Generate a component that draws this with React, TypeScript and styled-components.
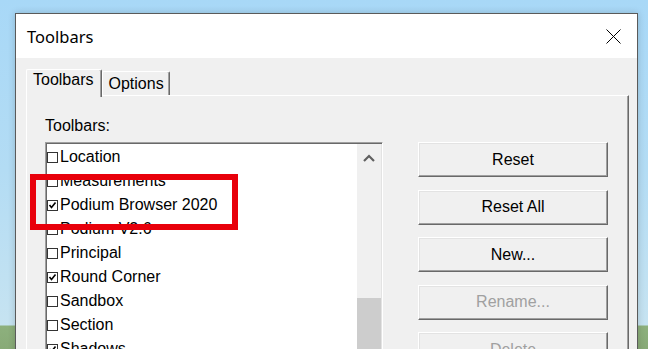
import React from "react";
import styled, { createGlobalStyle } from "styled-components";

const GlobalStyle = createGlobalStyle`
  html, body {
    margin: 0;
    padding: 0;
  }
`;

// 바탕화면 (배경)
const Desktop = styled.div`
  position: relative;
  width: 648px;
  height: 349px;
  overflow: hidden;
  background: linear-gradient(
    180deg,
    #a8d8f7 0px,
    #b3dcf4 170px,
    #c6e3f1 325px,
    #8db07d 326px,
    #88aa77 349px
  );
  font-family: "Liberation Sans", Arial, sans-serif;
  font-size: 16px;
  color: #000;
`;

const Dialog = styled.div`
  margin: 13px 0 0 15px;
  width: 621px;
  height: 400px;
  border: 1px solid #5a5a5a;
  background: #f0f0f0;
  box-shadow: 0 0 7px rgba(0, 0, 0, 0.18);
`;

const TitleBar = styled.div`
  height: 44px;
  background: #fff;
  display: flex;
  align-items: center;
  justify-content: space-between;
  padding: 0 16px 0 11px;
`;

const Title = styled.span`
  font-family: "Noto Sans", "Open Sans", sans-serif;
  font-size: 16.5px;
  color: #000;
`;

const CloseBtn = styled.div`
  width: 15px;
  height: 15px;
  display: flex;
`;

const Body = styled.div`
  padding: 11px 8px 0 10px;
`;

const TabStrip = styled.div`
  display: flex;
  align-items: flex-end;
  height: 26px;
  position: relative;
  z-index: 1;
`;

const Tab = styled.div<{ $active?: boolean }>`
  height: ${(p) => (p.$active ? "28px" : "24px")};
  margin-bottom: ${(p) => (p.$active ? "-2px" : "0")};
  padding: ${(p) => (p.$active ? "0 8px 0 6px" : "2px 5px 0 5px")};
  box-sizing: border-box;
  background: #f0f0f0;
  border-top: 1px solid #fff;
  border-left: 1px solid #fff;
  border-right: 1px solid #696969;
  border-top-left-radius: 2px;
  border-top-right-radius: 2px;
  box-shadow: inset -1px 0 0 #a0a0a0;
  line-height: 20px;
`;

const Panel = styled.div`
  border-top: 1px solid #fff;
  border-left: 1px solid #fff;
  border-right: 1px solid #696969;
  box-shadow: inset -1px 0 0 #a0a0a0;
  height: 300px;
  padding: 21px 0 0 18px;
`;

const Content = styled.div`
  display: grid;
  grid-template-columns: 338px 190px;
  grid-template-rows: 18px auto;
  column-gap: 35px;
  row-gap: 7px;
`;

const Label = styled.div`
  line-height: 18px;
  grid-column: 1 / 3;
`;

const ListBox = styled.div`
  height: 240px;
  background: #fff;
  border-top: 1px solid #a0a0a0;
  border-left: 1px solid #a0a0a0;
  border-right: 1px solid #fff;
  border-bottom: 1px solid #fff;
  box-shadow: inset 1px 1px 0 #696969, inset -1px -1px 0 #e3e3e3;
  padding: 1px;
  display: flex;
`;

const Items = styled.div`
  flex: 1;
  padding-top: 1px;
`;

const Row = styled.div`
  height: 24px;
  display: flex;
  align-items: center;
  line-height: 24px;
  white-space: nowrap;
`;

const Box = styled.span`
  width: 11px;
  height: 11px;
  box-sizing: border-box;
  border: 1px solid #333;
  background: #fff;
  margin: 1px 2px 0 0;
  display: flex;
  align-items: center;
  justify-content: center;
`;

const ScrollBar = styled.div`
  width: 24px;
  background: #f0f0f0;
  display: flex;
  flex-direction: column;
`;

const ScrollArrow = styled.div`
  height: 28px;
  display: flex;
  align-items: center;
  justify-content: center;
`;

const Thumb = styled.div`
  margin-top: 126px;
  flex: 1;
  background: #cdcdcd;
`;

const Buttons = styled.div`
  display: flex;
  flex-direction: column;
  gap: 12.5px;
`;

const Button = styled.div<{ $disabled?: boolean }>`
  height: 35px;
  box-sizing: border-box;
  background: #f0f0f0;
  border-top: 1px solid #fff;
  border-left: 1px solid #fff;
  border-right: 1px solid #696969;
  border-bottom: 1px solid #696969;
  box-shadow: inset -1px -1px 0 #a0a0a0, inset 1px 1px 0 #e3e3e3;
  display: flex;
  align-items: center;
  justify-content: center;
  color: ${(p) => (p.$disabled ? "#a0a0a0" : "#000")};
`;

// 빨간 표시 박스 (주석용 오버레이)
const Highlight = styled.div`
  position: absolute;
  left: 30px;
  top: 174px;
  width: 208px;
  height: 56px;
  box-sizing: border-box;
  border: 6px solid #e8000b;
  pointer-events: none;
`;

const items: { name: string; checked: boolean }[] = [
  { name: "Location", checked: false },
  { name: "Measurements", checked: false },
  { name: "Podium Browser 2020", checked: true },
  { name: "Podium V2.6", checked: false },
  { name: "Principal", checked: false },
  { name: "Round Corner", checked: true },
  { name: "Sandbox", checked: false },
  { name: "Section", checked: false },
  { name: "Shadows", checked: true },
];

const Check = () => (
  <svg width="9" height="9" viewBox="0 0 9 9">
    <polyline points="1.5,4 3.5,6.5 7.5,1.5" fill="none" stroke="#000" strokeWidth="1.6" />
  </svg>
);

const App: React.FC = () => {
  return (
    <Desktop>
      <GlobalStyle />
      <Dialog>
        <TitleBar>
          <Title>Toolbars</Title>
          <CloseBtn>
            <svg width="15" height="15" viewBox="0 0 15 15">
              <path d="M0.5 0.5 L14.5 14.5 M14.5 0.5 L0.5 14.5" stroke="#000" strokeWidth="1" />
            </svg>
          </CloseBtn>
        </TitleBar>
        <Body>
          <TabStrip>
            <Tab $active>Toolbars</Tab>
            <Tab>Options</Tab>
          </TabStrip>
          <Panel>
            <Content>
              <Label>Toolbars:</Label>
              <ListBox>
                <Items>
                  {items.map((it) => (
                    <Row key={it.name}>
                      <Box>{it.checked && <Check />}</Box>
                      {it.name}
                    </Row>
                  ))}
                </Items>
                <ScrollBar>
                  <ScrollArrow>
                    <svg width="12" height="8" viewBox="0 0 12 8">
                      <polyline points="1,7 6,2 11,7" fill="none" stroke="#606060" strokeWidth="2.2" />
                    </svg>
                  </ScrollArrow>
                  <Thumb />
                </ScrollBar>
              </ListBox>
              <Buttons>
                <Button>Reset</Button>
                <Button>Reset All</Button>
                <Button>New...</Button>
                <Button $disabled>Rename...</Button>
                <Button $disabled>Delete</Button>
              </Buttons>
            </Content>
          </Panel>
        </Body>
      </Dialog>
      <Highlight />
    </Desktop>
  );
};

export default App;
